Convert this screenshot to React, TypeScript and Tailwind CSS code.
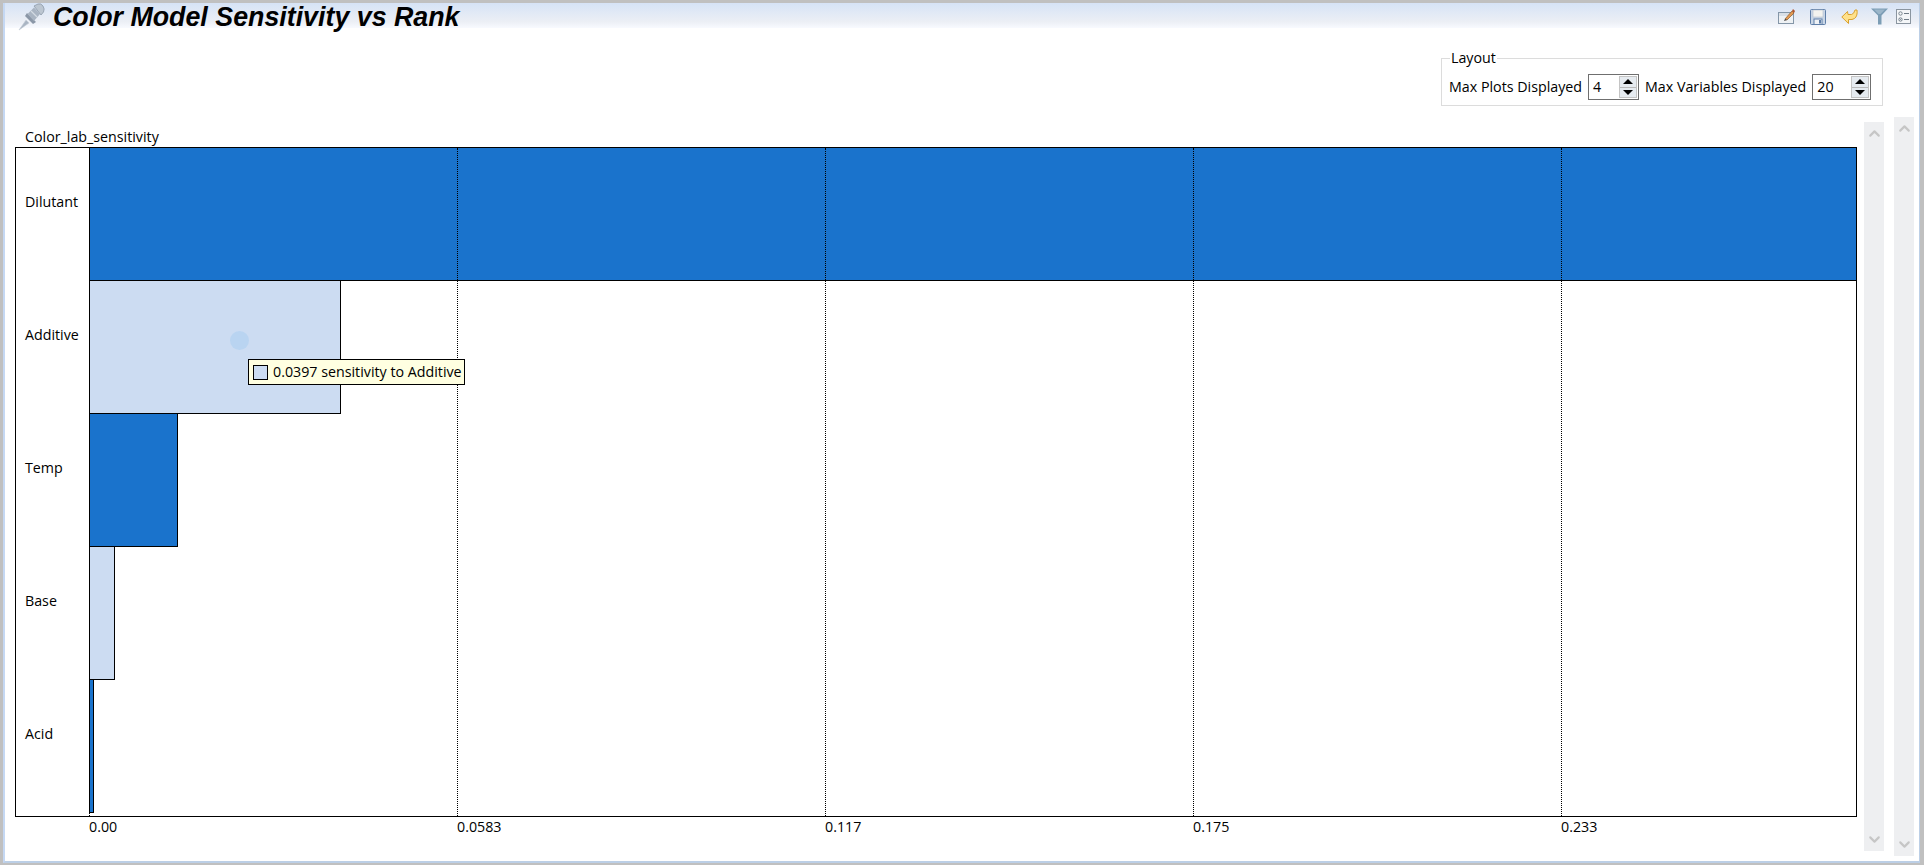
import { ChevronDown, ChevronUp } from "lucide-react";

const FONT = "font-['Open_Sans','Liberation_Sans',sans-serif]";

function PinIcon() {
  return (
    <svg width="28" height="28" viewBox="0 0 28 28" className="shrink-0">
      <path d="M2 27 L9 17 L12 20 Z" fill="#aab5c3" stroke="#c4ccd6" strokeWidth="0.6" />
      <path d="M8 13 L10 10 L19 19 L16 21 Z" fill="#8b97a7" />
      <path d="M10.5 11 L17 4.5 L23 11 L17 18 Z" fill="#a9b4c2" />
      <path d="M17 3 L21 1 Q24 0 26 3 Q28 6 26.5 9 L24 12 Z" fill="#bcc6d1" stroke="#8d99a8" strokeWidth="0.8" />
      <path d="M14 8 L20 14" stroke="#d3dae2" strokeWidth="1.2" />
    </svg>
  );
}

function EditIcon() {
  return (
    <svg width="17" height="17" viewBox="0 0 17 17">
      <rect x="0.5" y="4.5" width="15" height="11" fill="#eef1f4" stroke="#8496a8" />
      <rect x="1" y="5" width="14" height="3" fill="#d9dfe6" />
      <path d="M7 11 L14 3 L16 5 L9 12 Z" fill="#e39a52" stroke="#8a5a30" strokeWidth="0.7" />
      <path d="M7 11 L6 13 L9 12 Z" fill="#33302c" />
      <path d="M14 3 L15 1 L17 3 L16 5 Z" fill="#b0552e" />
    </svg>
  );
}

function SaveIcon() {
  return (
    <svg width="16" height="16" viewBox="0 0 16 16">
      <rect x="0.5" y="0.5" width="15" height="15" rx="1" fill="#c9d6e6" stroke="#5e7ea8" />
      <rect x="3" y="1" width="10" height="7" fill="#f3f3ef" stroke="#b6c0cc" strokeWidth="0.6" />
      <rect x="4" y="10" width="8" height="5.5" fill="#eef1f5" stroke="#5e7ea8" />
      <rect x="9" y="11" width="2" height="3.5" fill="#5e7ea8" />
    </svg>
  );
}

function BackIcon() {
  return (
    <svg width="17" height="16" viewBox="0 0 17 16">
      <path
        d="M0.8 8 L6.5 2.5 L7 5.5 L10.5 5.5 Q13 5 14 1 L16 1 Q16.8 7 13.5 9.5 Q11.5 11 7.5 10.5 L7.5 14.5 Z"
        fill="#ffe18a"
        stroke="#d9a12e"
        strokeWidth="1"
        strokeLinejoin="round"
      />
    </svg>
  );
}

function FunnelIcon() {
  return (
    <svg width="17" height="17" viewBox="0 0 17 17">
      <path d="M0 0.5 H17 L10.5 7.5 V16.5 H7 V7.5 Z" fill="#7c9db5" />
      <path d="M3 1.5 H14 L9.5 6 H7.5 Z" fill="#9bb6ca" />
    </svg>
  );
}

function OptionsIcon() {
  return (
    <svg width="15" height="15" viewBox="0 0 15 15">
      <rect x="0.5" y="0.5" width="14" height="14" fill="#f4f6f8" stroke="#8a95a0" />
      <circle cx="4.5" cy="4.5" r="1.7" fill="none" stroke="#7b8792" />
      <circle cx="4.5" cy="10.5" r="1.7" fill="none" stroke="#7b8792" />
      <path d="M3.4 9.4 L5.6 11.6 M5.6 9.4 L3.4 11.6" stroke="#7b8792" strokeWidth="0.7" />
      <path d="M8 4.5 H13 M8 10.5 H13" stroke="#6f7b86" />
    </svg>
  );
}

function Spinner({ value, width }: { value: string; width: string }) {
  return (
    <div className={`flex h-[26px] items-center justify-between border border-[#6f6f6f] bg-white pl-[4px] pr-[1px] ${width}`}>
      <span>{value}</span>
      <div className="flex h-[22px] w-[18px] flex-col gap-[1px] bg-[#b9b9b9] border border-[#c4c4c4]">
        <div className="flex flex-1 items-center justify-center bg-[#e6ebf0]">
          <svg width="10" height="5" viewBox="0 0 10 5"><path d="M5 0 L10 5 H0 Z" fill="#000" /></svg>
        </div>
        <div className="flex flex-1 items-center justify-center bg-[#e6ebf0]">
          <svg width="10" height="5" viewBox="0 0 10 5"><path d="M0 0 H10 L5 5 Z" fill="#000" /></svg>
        </div>
      </div>
    </div>
  );
}

function ScrollTrack({ className }: { className: string }) {
  return (
    <div className={`flex w-5 shrink-0 flex-col items-center justify-between bg-[#eeeff1] py-[3px] ${className}`}>
      <ChevronUp size={17} strokeWidth={3} className="text-[#c6c6c6]" />
      <ChevronDown size={17} strokeWidth={3} className="text-[#c6c6c6]" />
    </div>
  );
}

// each bar overlaps the next row by 1px so neighbours share a border line
const rows = [
  { label: "Dilutant", row: "h-[132px]", text: "pt-[43px]", bar: "h-[133px] w-full border-t-0 border-r-0 bg-[#1a73cc]" },
  { label: "Additive", row: "h-[133px]", text: "pt-[44px]", bar: "h-[134px] w-[252px] bg-[#ccdcf2]" },
  { label: "Temp", row: "h-[133px]", text: "pt-[44px]", bar: "h-[134px] w-[89px] bg-[#1a73cc]" },
  { label: "Base", row: "h-[133px]", text: "pt-[44px]", bar: "h-[134px] w-[26px] bg-[#ccdcf2]" },
  { label: "Acid", row: "h-[137px]", text: "pt-[44px]", bar: "h-[134px] w-[5px] bg-[#1a73cc]" },
];

const ticks = ["0.00", "0.0583", "0.117", "0.175", "0.233"];

export default function App() {
  return (
    <div className={`flex h-[865px] w-[1924px] bg-[#c0c0c0] pb-[2px] pl-[3px] pr-[4px] pt-[3px] text-[14.25px] text-black ${FONT}`}>
      <div className="flex min-w-0 flex-1 flex-col border-b-2 border-l-2 border-r border-b-[#bccfe6] border-l-[#c5d8f3] border-r-[#bccfe6] bg-white">
        {/* title bar */}
        <div className="flex h-[25px] shrink-0 items-center bg-linear-to-b from-[#d6e3f6] via-[#eceff5] via-75% to-[#f8faff] pr-[8px]">
          <div className="ml-[12px] mt-[2px]">
            <PinIcon />
          </div>
          <h1 className="ml-[8px] mt-[3px] font-['Liberation_Sans',sans-serif] text-[26.8px] font-bold italic leading-none">
            Color Model Sensitivity vs Rank
          </h1>
          <div className="ml-auto mt-[2px] flex items-center">
            <EditIcon />
            <div className="ml-[15px]"><SaveIcon /></div>
            <div className="ml-[15px]"><BackIcon /></div>
            <div className="ml-[13px]"><FunnelIcon /></div>
            <div className="ml-[8px]"><OptionsIcon /></div>
          </div>
        </div>

        {/* layout options */}
        <div className="flex h-[89px] shrink-0 justify-end pr-[36px] pt-[23px]">
          <fieldset className="h-[55px] w-[442px] border border-[#dcdcdc] px-[7px]">
            <legend className="ml-[1px] px-[1px] leading-[14px]">Layout</legend>
            <div className="flex items-center gap-[6px] pt-[9px]">
              <span className="whitespace-nowrap">Max Plots Displayed</span>
              <Spinner value="4" width="w-[51px]" />
              <span className="whitespace-nowrap">Max Variables Displayed</span>
              <Spinner value="20" width="w-[59px]" />
            </div>
          </fieldset>
        </div>

        <div className="flex min-h-0 flex-1 pb-[5px]">
          <div className="flex min-w-0 flex-1 pl-[10px] pr-[10px]">
            <div className="min-w-0 flex-1">
              <div className="ml-[10px] h-[30px] pt-[10px] leading-[20px]">Color_lab_sensitivity</div>
              {/* plot */}
              <div className="relative h-[670px] border border-black">
                {rows.map((row) => (
                  <div key={row.label} className={`flex ${row.row}`}>
                    <div className={`w-[73px] shrink-0 pl-[9px] ${row.text}`}>{row.label}</div>
                    <div className="min-w-0 flex-1">
                      <div className={`border border-black ${row.bar}`} />
                    </div>
                  </div>
                ))}
                {/* grid lines */}
                <div className="absolute bottom-0 left-[73px] top-0 flex">
                  {ticks.map((tick) => (
                    <div key={tick} className="w-[368px] border-l border-dotted border-black last:w-[294px]" />
                  ))}
                </div>
                {/* hover marker and tooltip */}
                <div className="absolute left-[214px] top-[183px] h-[19px] w-[19px] rounded-full bg-[#b9d4f1]" />
                <div className="absolute left-[232px] top-[211px] flex h-[26px] w-[217px] items-center gap-[5px] whitespace-nowrap border border-black bg-[#ffffe1] pl-[4px]">
                  <div className="h-[15px] w-[15px] border border-black bg-[#ccdcf2]" />
                  <span>0.0397 sensitivity to Additive</span>
                </div>
              </div>
              {/* axis */}
              <div className="flex pl-[74px] leading-[20px]">
                {ticks.map((tick) => (
                  <div key={tick} className="w-[368px] shrink-0 last:w-auto">{tick}</div>
                ))}
              </div>
            </div>
            <ScrollTrack className="my-[5px] ml-[7px]" />
          </div>
          <ScrollTrack className="mr-[5px]" />
        </div>
      </div>
    </div>
  );
}
